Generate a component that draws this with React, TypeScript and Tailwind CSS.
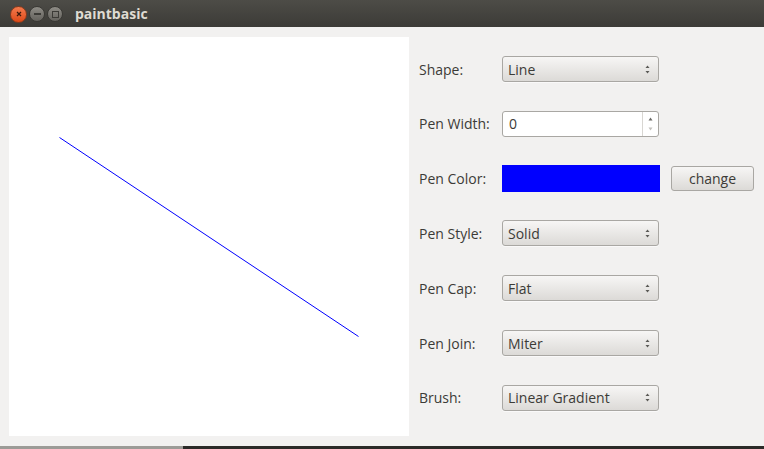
import React from 'react';

const font = { fontFamily: '"Open Sans", "DejaVu Sans", sans-serif' };

const Arrows = () => (
    <svg width="7" height="11" viewBox="0 0 7 11" className="shrink-0">
        <path d="M3.5 1.5 L5.5 4 L1.5 4 Z" fill="#5a5955" />
        <path d="M3.5 9.5 L5.5 7 L1.5 7 Z" fill="#5a5955" />
    </svg>
);

const Combo = ({ value }: { value: string }) => (
    <div className="w-[157px] h-[26px] flex items-center justify-between pl-[5px] pr-[7px] rounded-[3px] border border-[#a9a7a3] bg-gradient-to-b from-[#f7f6f5] to-[#dcdad7] text-[14px] text-[#3c3b37] shadow-[0_1px_0_rgba(255,255,255,0.6)]">
        <span>{value}</span>
        <Arrows />
    </div>
);

const SpinBox = () => (
    <div className="w-[157px] h-[26px] flex rounded-[3px] border border-[#a9a7a3] bg-white text-[14px] text-[#3c3b37]">
        <div className="flex-1 flex items-center pl-[6px]">0</div>
        <div className="w-[16px] flex flex-col items-center justify-center gap-[6px] border-l border-[#d8d6d2]">
            <svg width="7" height="4" viewBox="0 0 7 4">
                <path d="M3.5 0.5 L5.5 3.5 L1.5 3.5 Z" fill="#6a6965" />
            </svg>
            <svg width="7" height="4" viewBox="0 0 7 4">
                <path d="M3.5 3.5 L5.5 0.5 L1.5 0.5 Z" fill="#c2c0bc" />
            </svg>
        </div>
    </div>
);

const Row = ({ label, children }: { label: string; children: React.ReactNode }) => (
    <div className="h-[26px] flex items-center">
        <div className="w-[83px] text-[14px] text-[#3c3b37]">{label}</div>
        {children}
    </div>
);

export default function App() {
    return (
        <div className="w-[764px] h-[449px] flex flex-col bg-[#f2f1f0] overflow-hidden" style={font}>
            {/* Title bar */}
            <div className="h-[27px] shrink-0 flex items-center bg-gradient-to-b from-[#4d4c47] to-[#3c3b37] pl-[10px]">
                <div className="flex items-center gap-[2px] mt-[1px]">
                    <div className="w-[17px] h-[17px] rounded-full bg-gradient-to-b from-[#f37a4c] to-[#dd4814] border border-[#8a3a1c] flex items-center justify-center">
                        <svg width="6" height="6" viewBox="0 0 6 6">
                            <path d="M1 1 L5 5 M5 1 L1 5" stroke="#3c1a0c" strokeWidth="1.3" />
                        </svg>
                    </div>
                    <div className="w-[16px] h-[16px] rounded-full bg-gradient-to-b from-[#8e8c86] to-[#64625d] border border-[#3a3935] flex items-center justify-center">
                        <div className="w-[7px] h-[1.5px] bg-[#3c3b37]" />
                    </div>
                    <div className="w-[16px] h-[16px] rounded-full bg-gradient-to-b from-[#8e8c86] to-[#64625d] border border-[#3a3935] flex items-center justify-center">
                        <div className="w-[7px] h-[7px] border-[1.5px] border-[#3c3b37]" />
                    </div>
                </div>
                <span className="ml-[12px] text-[14px] font-bold text-[#dfdbd2]">paintbasic</span>
            </div>

            {/* Body */}
            <div className="flex-1 flex pl-[9px] pt-[10px]">
                <div className="w-[400px] h-[399px] bg-white shrink-0">
                    <svg width="400" height="399">
                        <line x1="50.5" y1="100.5" x2="349.5" y2="299.5" stroke="#0000ff" strokeWidth="1" />
                    </svg>
                </div>
                <div className="ml-[10px] pt-[19px] flex flex-col gap-[28.83px]">
                    <Row label="Shape:"><Combo value="Line" /></Row>
                    <Row label="Pen Width:"><SpinBox /></Row>
                    <Row label="Pen Color:">
                        <div className="w-[158px] h-[27px] bg-[#0000ff]" />
                        <button className="ml-[11px] w-[83px] h-[25px] rounded-[3px] border border-[#a9a7a3] bg-gradient-to-b from-[#f7f6f5] to-[#dcdad7] text-[14px] text-[#3c3b37]">
                            change
                        </button>
                    </Row>
                    <Row label="Pen Style:"><Combo value="Solid" /></Row>
                    <Row label="Pen Cap:"><Combo value="Flat" /></Row>
                    <Row label="Pen Join:"><Combo value="Miter" /></Row>
                    <Row label="Brush:"><Combo value="Linear Gradient" /></Row>
                </div>
            </div>

            {/* Bottom edge */}
            <div className="h-[3px] shrink-0 flex">
                <div className="w-[183px] bg-[#9c9b97]" />
                <div className="flex-1 bg-[#2b2a27]" />
            </div>
        </div>
    );
}
